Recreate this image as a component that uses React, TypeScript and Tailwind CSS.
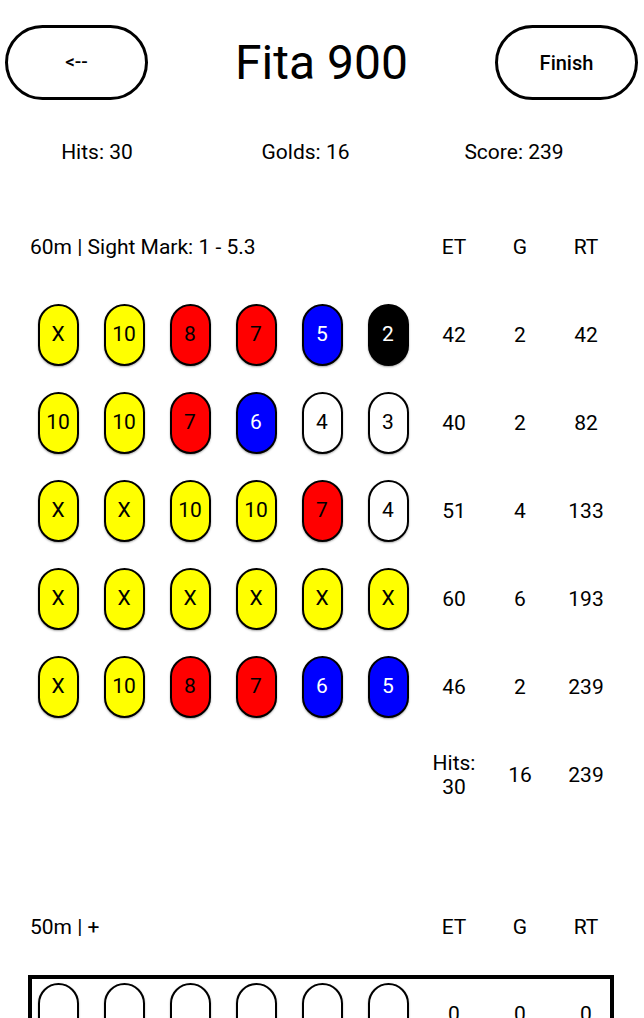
import React from "react";

type Arrow = string;

type EndRow = {
  arrows: Arrow[];
  et: number;
  g: number;
  rt: number;
};

const ends: EndRow[] = [
  { arrows: ["X", "10", "8", "7", "5", "2"], et: 42, g: 2, rt: 42 },
  { arrows: ["10", "10", "7", "6", "4", "3"], et: 40, g: 2, rt: 82 },
  { arrows: ["X", "X", "10", "10", "7", "4"], et: 51, g: 4, rt: 133 },
  { arrows: ["X", "X", "X", "X", "X", "X"], et: 60, g: 6, rt: 193 },
  { arrows: ["X", "10", "8", "7", "6", "5"], et: 46, g: 2, rt: 239 },
];

function pillClass(v: string) {
  if (v === "X" || v === "10" || v === "9") return "bg-[#ffff00] text-black";
  if (v === "8" || v === "7") return "bg-[#ff0000] text-black";
  if (v === "6" || v === "5") return "bg-[#0000ff] text-white";
  if (v === "4" || v === "3") return "bg-white text-black";
  if (v === "2" || v === "1") return "bg-black text-white";
  return "bg-white text-black";
}

function Pill({ value }: { value?: string }) {
  return (
    <div className="flex justify-center">
      <div
        className={
          "flex h-[62px] w-[41px] items-center justify-center rounded-full border-2 border-black text-[21px] shadow-[0_1px_2px_rgba(0,0,0,0.35)] " +
          (value ? pillClass(value) : "bg-white")
        }
      >
        {value ?? ""}
      </div>
    </div>
  );
}

function Cell({ children }: { children: React.ReactNode }) {
  return <div className="text-center text-[21px] leading-[24px]">{children}</div>;
}

function SectionHeader({ title }: { title: string }) {
  return (
    <div className="ml-[25px] grid h-[88px] w-[594px] grid-cols-9 items-center">
      <div className="col-span-6 pl-[5px] text-[21px] leading-[24px]">{title}</div>
      <Cell>ET</Cell>
      <Cell>G</Cell>
      <Cell>RT</Cell>
    </div>
  );
}

export default function App() {
  return (
    <div className="min-h-screen bg-white text-black font-['Roboto','Liberation_Sans',sans-serif]">
      {/* top bar */}
      <div className="flex items-center justify-between pl-[5px] pr-[6px] pt-[25px]">
        <button className="flex h-[75px] w-[143px] items-center justify-center rounded-full border-[3px] border-black text-[19px] font-medium">
          {"<--"}
        </button>
        <h1 className="text-[48px] leading-none">Fita 900</h1>
        <button className="flex h-[75px] w-[143px] items-center justify-center rounded-full border-[3px] border-black text-[20px] font-medium">
          Finish
        </button>
      </div>

      {/* totals */}
      <div className="mt-[37px] grid h-[24px] grid-cols-[194px_223px_194px] items-center text-[21px]">
        <div className="text-center">Hits: 30</div>
        <div className="text-center">Golds: 16</div>
        <div className="text-center">Score: 239</div>
      </div>

      {/* 60m */}
      <div className="mt-[42px]">
        <SectionHeader title="60m | Sight Mark: 1 - 5.3" />
        {ends.map((end, i) => (
          <div key={i} className="ml-[25px] grid h-[88px] w-[594px] grid-cols-9 items-center">
            {end.arrows.map((a, j) => (
              <Pill key={j} value={a} />
            ))}
            <Cell>{end.et}</Cell>
            <Cell>{end.g}</Cell>
            <Cell>{end.rt}</Cell>
          </div>
        ))}
        <div className="ml-[25px] grid h-[88px] w-[594px] grid-cols-9 items-center">
          <div className="col-span-6" />
          <Cell>
            Hits:
            <br />
            30
          </Cell>
          <Cell>16</Cell>
          <Cell>239</Cell>
        </div>
      </div>

      {/* 50m */}
      <div className="mt-[64px]">
        <SectionHeader title="50m | +" />
        <div className="ml-[28px] mt-[4px] w-[586px] border-4 border-black">
          <div className="-ml-[7px] grid h-[70px] w-[594px] grid-cols-9 items-center">
            {Array.from({ length: 6 }).map((_, j) => (
              <Pill key={j} />
            ))}
            <Cell>0</Cell>
            <Cell>0</Cell>
            <Cell>0</Cell>
          </div>
        </div>
      </div>
    </div>
  );
}
